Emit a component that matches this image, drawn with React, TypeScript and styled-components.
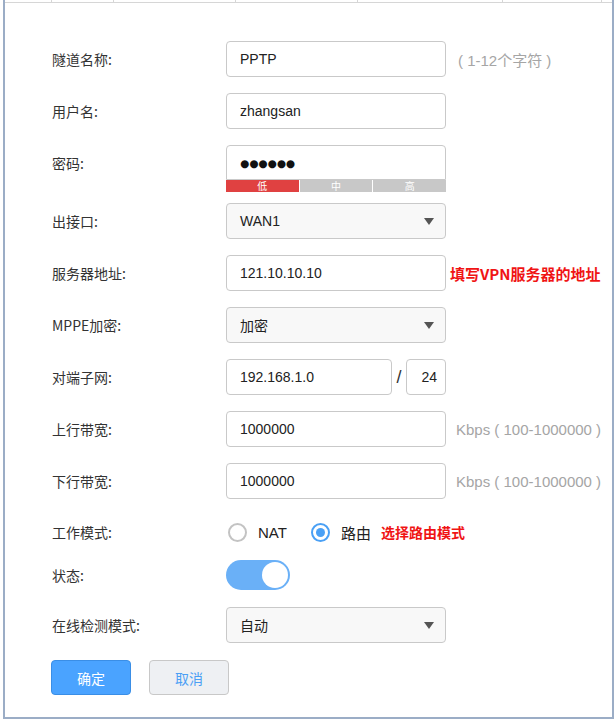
import React from "react";
import styled, { createGlobalStyle } from "styled-components";

const Global = createGlobalStyle`
  html, body { margin: 0; padding: 0; background: #fff; }
  body { font-family: "Microsoft YaHei", "Noto Sans CJK SC", "Liberation Sans", sans-serif; font-size: 14px; color: #333; }
  * { box-sizing: border-box; }
`;

const Frame = styled.div`
  margin-left: 3px;
  width: 611px;
  height: 719px;
  border-left: 2px solid #9badc6;
  border-right: 2px solid #9badc6;
  border-bottom: 2px solid #9badc6;
  display: flex;
  flex-direction: column;
`;

const TopStrip = styled.div`
  height: 3px;
  border-bottom: 1px solid #d6d6d6;
  display: grid;
  grid-template-columns: 47px 62px 122px 122px 145px 99px 1fr;
`;

const TopCell = styled.div`
  border-right: 1px solid #d6d6d6;
  &:last-child { border-right: none; }
`;

const Form = styled.div`
  display: flex;
  flex-direction: column;
  padding: 38px 0 0 47px;
`;

const Row = styled.div<{ $mt: number; $h?: number }>`
  display: flex;
  align-items: center;
  margin-top: ${(p) => p.$mt}px;
  min-height: ${(p) => p.$h ?? 36}px;
`;

const Label = styled.div`
  width: 174px;
  color: #333;
  font-size: 14px;
  flex-shrink: 0;
`;

const Input = styled.div<{ $w?: number; $align?: string }>`
  width: ${(p) => p.$w ?? 220}px;
  height: 36px;
  border: 1px solid #c9c9c9;
  border-radius: 4px;
  background: #fff;
  display: flex;
  align-items: center;
  justify-content: ${(p) => p.$align ?? "flex-start"};
  padding: 0 ${(p) => (p.$align ? 8 : 13)}px;
  font-family: "Liberation Sans", "Noto Sans CJK SC", sans-serif;
  font-size: 14px;
  color: #222;
`;

const SelectBox = styled(Input)`
  background: #f8f8f8;
  justify-content: space-between;
  padding-right: 11px;
`;

const Caret = styled.span`
  width: 0;
  height: 0;
  border-left: 5px solid transparent;
  border-right: 5px solid transparent;
  border-top: 7px solid #555;
`;

const Hint = styled.span<{ $ml: number }>`
  margin-left: ${(p) => p.$ml}px;
  color: #a5a5a5;
  font-size: 15px;
  font-family: "Liberation Sans", "Noto Sans CJK SC", sans-serif;
`;

const Note = styled.span<{ $ml: number; $size?: number }>`
  margin-left: ${(p) => p.$ml}px;
  color: #f01414;
  font-weight: bold;
  font-size: ${(p) => p.$size ?? 14}px;
  font-family: "Noto Sans CJK SC", sans-serif;
`;

const PwdWrap = styled.div`
  display: flex;
  flex-direction: column;
  width: 220px;
`;

const PwdBox = styled(Input)`
  height: 35px;
  border-bottom-left-radius: 0;
  border-bottom-right-radius: 0;
  font-family: "DejaVu Sans", sans-serif;
  font-size: 10.5px;
  color: #111;
`;

const Strength = styled.div`
  display: grid;
  grid-template-columns: 1fr 1fr 1fr;
  gap: 1px;
  height: 12px;
`;

const Level = styled.div<{ $on?: boolean }>`
  background: ${(p) => (p.$on ? "#e04141" : "#c8c8c8")};
  color: #fff;
  font-size: 10px;
  line-height: 12px;
  text-align: center;
  font-family: "Noto Sans CJK SC", sans-serif;
`;

const Slash = styled.span`
  width: 14px;
  text-align: center;
  font-size: 18px;
  color: #333;
  font-family: "Liberation Sans", sans-serif;
`;

const RadioGroup = styled.div`
  display: flex;
  align-items: center;
  padding-left: 2px;
`;

const RadioCircle = styled.span<{ $on?: boolean }>`
  width: 19px;
  height: 19px;
  border-radius: 50%;
  border: 2px solid ${(p) => (p.$on ? "#4aa0f5" : "#c3c3c3")};
  display: flex;
  align-items: center;
  justify-content: center;
  &::after {
    content: "";
    width: 9px;
    height: 9px;
    border-radius: 50%;
    background: ${(p) => (p.$on ? "#4aa0f5" : "transparent")};
  }
`;

const RadioText = styled.span<{ $w: number }>`
  margin-left: 11px;
  width: ${(p) => p.$w}px;
  font-size: 15px;
  color: #222;
  font-family: "Liberation Sans", "Noto Sans CJK SC", sans-serif;
`;

const Switch = styled.div`
  width: 64px;
  height: 30px;
  border-radius: 15px;
  background: #6ab0f7;
  display: flex;
  align-items: center;
  justify-content: flex-end;
  padding: 2px;
`;

const Knob = styled.span`
  width: 26px;
  height: 26px;
  border-radius: 50%;
  background: #fff;
`;

const Buttons = styled.div`
  display: flex;
  gap: 18px;
  margin-top: 17px;
  margin-left: -1px;
`;

const Button = styled.button<{ $primary?: boolean }>`
  width: 80px;
  height: 35px;
  border-radius: 4px;
  border: 1px solid ${(p) => (p.$primary ? "#3a8ee6" : "#c8c8c8")};
  background: ${(p) => (p.$primary ? "#4aa3ff" : "#eef0f3")};
  color: ${(p) => (p.$primary ? "#fff" : "#4a9ff5")};
  font-size: 14px;
  font-family: "Microsoft YaHei", "Noto Sans CJK SC", sans-serif;
  padding: 0;
`;

export default function App() {
  return (
    <>
      <Global />
      <Frame>
        <TopStrip>
          {Array.from({ length: 7 }).map((_, i) => (
            <TopCell key={i} />
          ))}
        </TopStrip>
        <Form>
          <Row $mt={0}>
            <Label>隧道名称:</Label>
            <Input>PPTP</Input>
            <Hint $ml={12}>( 1-12个字符 )</Hint>
          </Row>
          <Row $mt={16}>
            <Label>用户名:</Label>
            <Input>zhangsan</Input>
          </Row>
          <Row $mt={16} style={{ alignItems: "flex-start" }}>
            <Label style={{ lineHeight: "36px" }}>密码:</Label>
            <PwdWrap>
              <PwdBox>●●●●●●</PwdBox>
              <Strength>
                <Level $on>低</Level>
                <Level>中</Level>
                <Level>高</Level>
              </Strength>
            </PwdWrap>
          </Row>
          <Row $mt={11}>
            <Label>出接口:</Label>
            <SelectBox>
              WAN1
              <Caret />
            </SelectBox>
          </Row>
          <Row $mt={16}>
            <Label>服务器地址:</Label>
            <Input>121.10.10.10</Input>
            <Note $ml={4} $size={15}>填写VPN服务器的地址</Note>
          </Row>
          <Row $mt={16}>
            <Label>MPPE加密:</Label>
            <SelectBox>
              加密
              <Caret />
            </SelectBox>
          </Row>
          <Row $mt={16}>
            <Label>对端子网:</Label>
            <Input $w={166}>192.168.1.0</Input>
            <Slash>/</Slash>
            <Input $w={40} $align="flex-end">24</Input>
          </Row>
          <Row $mt={16}>
            <Label>上行带宽:</Label>
            <Input>1000000</Input>
            <Hint $ml={10}>Kbps ( 100-1000000 )</Hint>
          </Row>
          <Row $mt={16}>
            <Label>下行带宽:</Label>
            <Input>1000000</Input>
            <Hint $ml={10}>Kbps ( 100-1000000 )</Hint>
          </Row>
          <Row $mt={15}>
            <Label>工作模式:</Label>
            <RadioGroup>
              <RadioCircle />
              <RadioText $w={53}>NAT</RadioText>
              <RadioCircle $on />
              <RadioText $w={40}>路由</RadioText>
              <Note $ml={0}>选择路由模式</Note>
            </RadioGroup>
          </Row>
          <Row $mt={10} $h={30}>
            <Label>状态:</Label>
            <Switch>
              <Knob />
            </Switch>
          </Row>
          <Row $mt={17}>
            <Label>在线检测模式:</Label>
            <SelectBox>
              自动
              <Caret />
            </SelectBox>
          </Row>
          <Buttons>
            <Button $primary>确定</Button>
            <Button>取消</Button>
          </Buttons>
        </Form>
      </Frame>
    </>
  );
}
